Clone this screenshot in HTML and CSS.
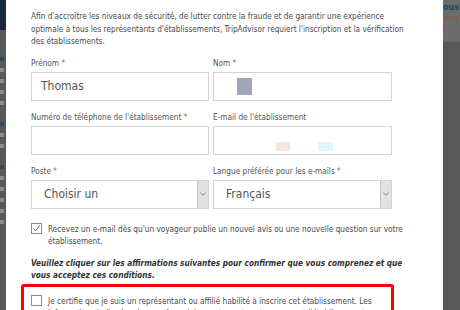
FILE: index.html
```html
<!DOCTYPE html>
<html lang="fr">
<head>
  <meta charset="UTF-8">
  <title>Inscription de l'établissement</title>
  <link rel="stylesheet" href="styles.css">
</head>
<body>
  <div class="side side-left">
    <div class="side-top"></div>
    <span class="frag frag-blue"></span>
    <span class="frag"></span>
    <span class="frag"></span>
    <span class="frag"></span>
    <span class="frag"></span>
    <span class="frag frag-blue gap"></span>
    <span class="frag"></span>
    <span class="frag"></span>
    <span class="frag frag-blue gap"></span>
    <span class="frag"></span>
    <span class="frag"></span>
    <span class="frag"></span>
    <span class="frag"></span>
    <span class="frag"></span>
  </div>

  <div class="modal">
    <p class="intro">Afin d'accroître les niveaux de sécurité, de lutter contre la fraude et de garantir une expérience optimale à tous les représentants d'établissements, TripAdvisor requiert l'inscription et la vérification des établissements.</p>

    <div class="form">
      <div class="field">
        <label>Prénom <span class="req">*</span></label>
        <div class="input"><span class="value">Thomas</span></div>
      </div>
      <div class="field">
        <label>Nom <span class="req">*</span></label>
        <div class="input"><span class="blur blur-grey"></span></div>
      </div>
      <div class="field">
        <label>Numéro de téléphone de l'établissement <span class="req">*</span></label>
        <div class="input"></div>
      </div>
      <div class="field">
        <label>E-mail de l'établissement</label>
        <div class="input"><span class="blur blur-peach"></span><span class="blur blur-cyan"></span></div>
      </div>
      <div class="field">
        <label>Poste <span class="req">*</span></label>
        <div class="input select">
          <span class="value">Choisir un</span>
          <span class="arrow"><svg width="6" height="4" viewBox="0 0 6 4"><path d="M0.5 0.8 L3 3.2 L5.5 0.8" fill="none" stroke="#777" stroke-width="0.9"/></svg></span>
        </div>
      </div>
      <div class="field">
        <label>Langue préférée pour les e-mails <span class="req">*</span></label>
        <div class="input select">
          <span class="value">Français</span>
          <span class="arrow"><svg width="6" height="4" viewBox="0 0 6 4"><path d="M0.5 0.8 L3 3.2 L5.5 0.8" fill="none" stroke="#777" stroke-width="0.9"/></svg></span>
        </div>
      </div>
    </div>

    <div class="check-row">
      <span class="box"><svg width="9" height="9" viewBox="0 0 9 9"><path d="M1.5 4.5 L3.6 6.8 L7.8 1.4" fill="none" stroke="#666" stroke-width="1"/></svg></span>
      <p>Recevez un e-mail dès qu'un voyageur publie un nouvel avis ou une nouvelle question sur votre établissement.</p>
    </div>

    <p class="notice">Veuillez cliquer sur les affirmations suivantes pour confirmer que vous comprenez et que vous acceptez ces conditions.</p>

    <div class="terms">
      <div class="check-row">
        <span class="box"></span>
        <p>Je certifie que je suis un représentant ou affilié habilité à inscrire cet établissement. Les informations indiquées dans ce formulaire sont exactes et concernent l'établissement.</p>
      </div>
    </div>
  </div>

  <div class="side side-right">
    <div class="side-head">
      <div class="side-txt blue">ous</div>
      <div class="side-txt orange">mer<br>r</div>
    </div>
  </div>
</body>
</html>
```

FILE: styles.css
```css
body{
  margin: 0;
  display: flex;
  height: 310px;
  overflow: hidden;
  font-family: "DejaVu Sans Condensed", "DejaVu Sans", Tahoma, sans-serif;
  background: #575757;
}

.side{
  background: #585858;
  height: 100%;
  overflow: hidden;
  flex-shrink: 0;
}
.side-left{
  width: 6px;
  display: flex;
  flex-direction: column;
}
.side-top{
  height: 30px;
  background: #16283a;
  margin-bottom: 27px;
}
.frag{
  display: block;
  width: 4px;
  height: 4px;
  margin-bottom: 7px;
  background: #8c8c8c;
}
.frag-blue{
  background: #2a4a66;
}
.frag.gap{
  margin-top: 10px;
}
.side-txt{
  font-size: 9px;
  line-height: 11px;
  white-space: nowrap;
}
.blue{
  color: #1a4a6a;
  font-weight: bold;
}
.orange{
  color: #8a5a3a;
}
.side-right{
  width: 17px;
}
.side-head{
  height: 42px;
  background: #6c6c6c;
  border-bottom: 1px solid #666;
  padding-top: 2px;
  box-sizing: border-box;
}

.modal{
  width: 437px;
  flex-shrink: 0;
  background: #fff;
  box-sizing: border-box;
  padding: 10px 39px 0 25px;
  overflow: hidden;
  color: #444;
  font-size: 8.2px;
}

.intro{
  margin: 0 0 9px 0;
  line-height: 12.5px;
  color: #4a4a4a;
}

.form{
  display: grid;
  grid-template-columns: 178px 179px;
  column-gap: 4px;
  row-gap: 10px;
}
.field label{
  display: block;
  line-height: 12px;
  height: 12px;
  margin-bottom: 3px;
  color: #555;
  white-space: nowrap;
}
.req{
  color: #e0463a;
}
.input{
  height: 29px;
  border: 1px solid #d4d4d4;
  box-sizing: border-box;
  position: relative;
  display: flex;
  align-items: center;
  padding-left: 9px;
}
.value{
  font-size: 12px;
  color: #555;
}
.select .value{
  padding-left: 3px;
}
.select .arrow{
  margin-left: auto;
  width: 10px;
  align-self: stretch;
  background: #e2e2e2;
  border-left: 1px solid #c4c4c4;
  display: flex;
  align-items: center;
  justify-content: center;
}
.blur{
  position: absolute;
  display: block;
}
.blur-grey{
  left: 23px;
  top: 5px;
  width: 15px;
  height: 17px;
  background: #9fa7bb;
}
.blur-peach{
  left: 62px;
  top: 15px;
  width: 14px;
  height: 9px;
  background: #f6e6dc;
}
.blur-cyan{
  left: 104px;
  top: 15px;
  width: 15px;
  height: 9px;
  background: #e2f6f8;
}

.check-row{
  display: flex;
  align-items: flex-start;
  margin-top: 14px;
}
.check-row .box{
  width: 9px;
  height: 9px;
  border: 1px solid #8a8a8a;
  flex-shrink: 0;
  margin-right: 6px;
  position: relative;
}
.check-row .box svg{
  position: absolute;
  left: 0;
  top: 0;
}
.check-row p{
  margin: 0;
  line-height: 12px;
  color: #4a4a4a;
}

.notice{
  margin: 10px 0 3px 0;
  line-height: 12px;
  font-weight: bold;
  font-style: italic;
  color: #333;
}

.terms{
  width: 373px;
  box-sizing: border-box;
  margin-left: -10px;
  border: 3px solid #f00;
  border-radius: 3px;
  padding: 8px 8px 0 7px;
}
.terms .check-row{
  margin-top: 0;
}
```
